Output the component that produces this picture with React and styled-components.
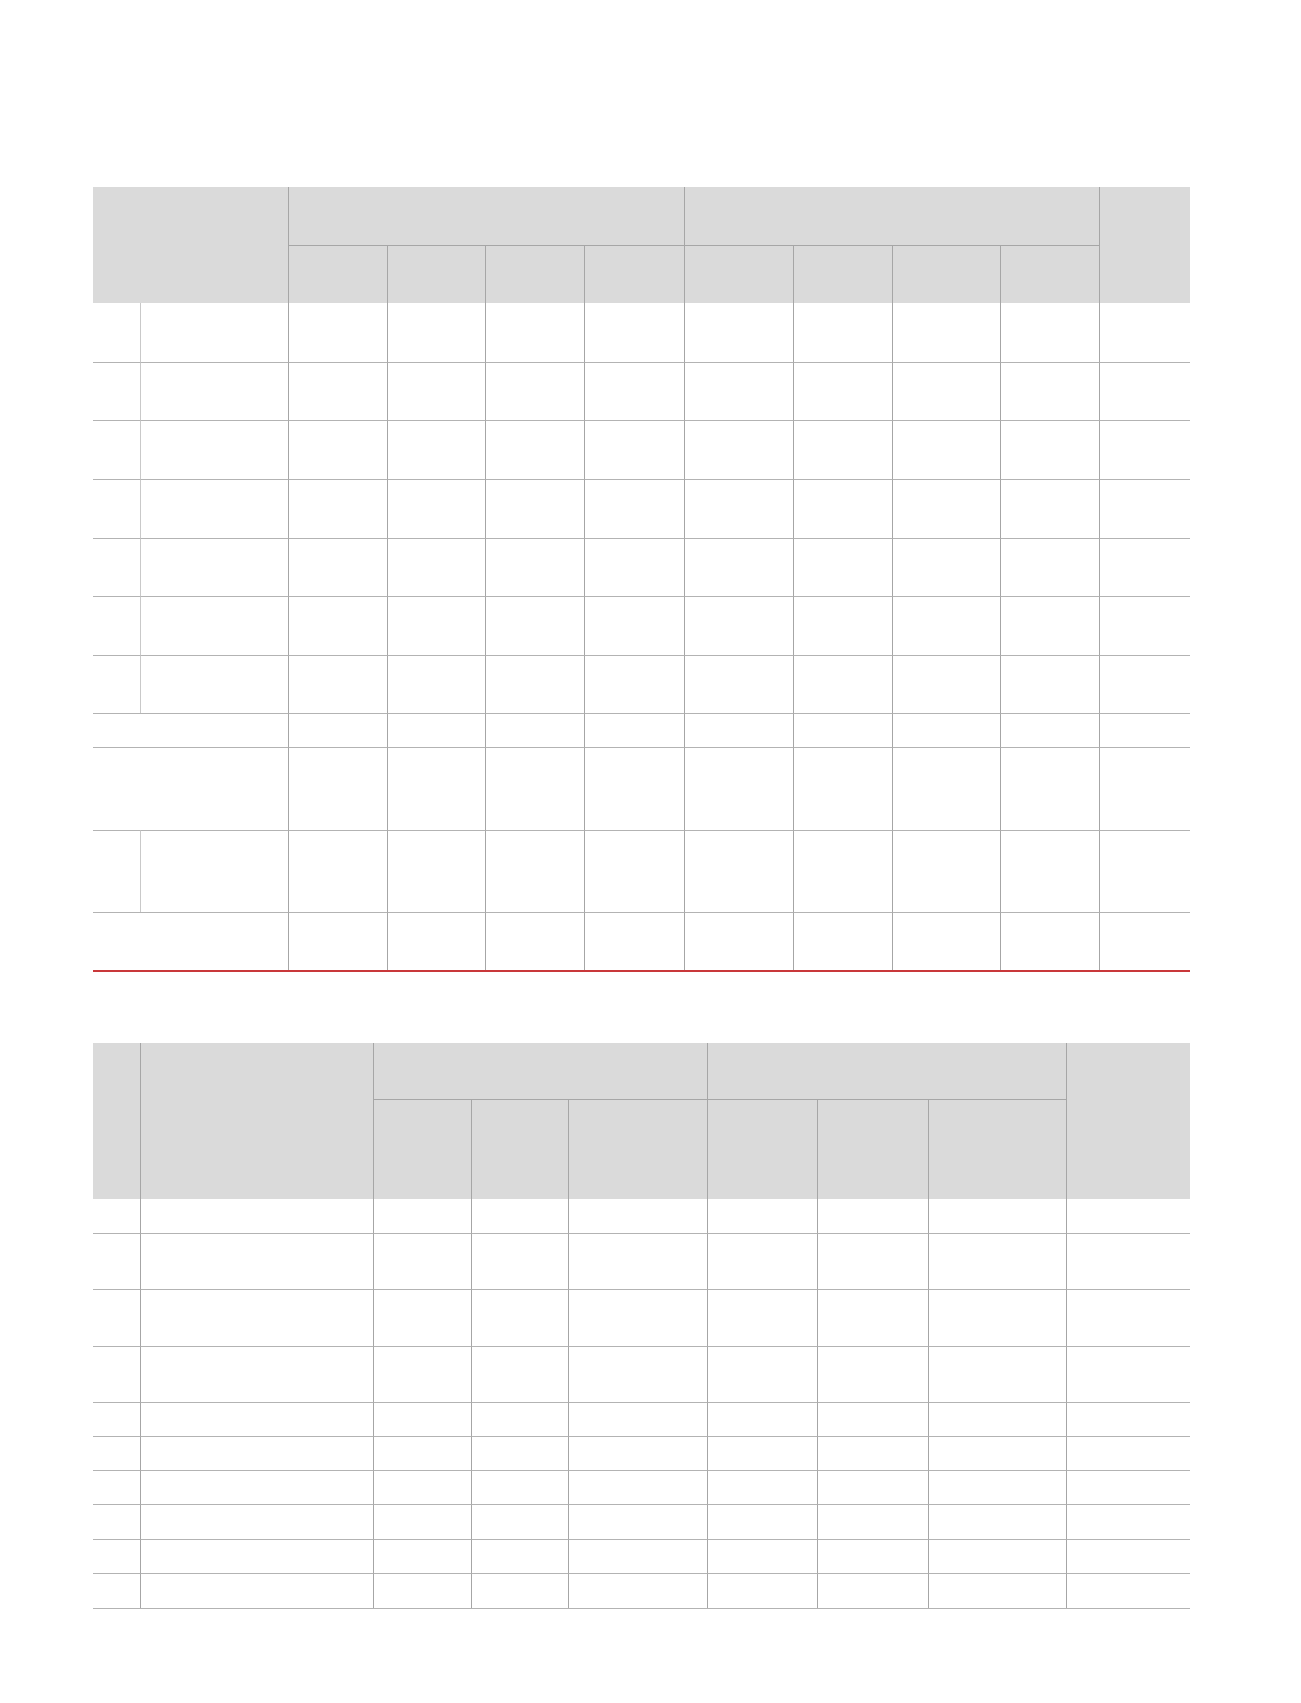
import React from "react";
import styled, { createGlobalStyle } from "styled-components";

const GlobalStyle = createGlobalStyle`
  html, body {
    margin: 0;
    padding: 0;
    background: #ffffff;
    font-family: "Liberation Sans", Arial, sans-serif;
  }
`;

const LINE = "#b3b3b3";
const LINE_DARK = "#a6a6a6";
const LINE_LIGHT = "#c9c9c9";
const HEAD_BG = "#dadada";

const Page = styled.main`
  display: flex;
  flex-direction: column;
  gap: 71px;
  padding: 187px 0 95px 93px;
`;

const Grid = styled.div`
  display: grid;
  width: 1097px;
  grid-template-columns: ${(p) => p.$cols.map((c) => `${c}px`).join(" ")};
  grid-template-rows: ${(p) => p.$rows.map((r) => `${r}px`).join(" ")};
  border-bottom: ${(p) => (p.$accent ? "2px solid #c9383a" : `1px solid ${LINE}`)};
`;

const Cell = styled.div`
  box-sizing: border-box;
  grid-column: ${(p) => p.$c} / span ${(p) => p.$cs || 1};
  grid-row: ${(p) => p.$r} / span ${(p) => p.$rs || 1};
  background: ${(p) => (p.$head ? HEAD_BG : "transparent")};
  border-top: ${(p) => (p.$top ? `1px solid ${p.$head ? LINE_DARK : LINE}` : "none")};
  border-left: ${(p) =>
    p.$left ? `1px solid ${p.$light ? LINE_LIGHT : LINE_DARK}` : "none"};
`;

// table 1 ---------------------------------------------------------------
const cols1 = [47, 148, 99, 98, 99, 100, 109, 99, 108, 99, 91];
const rows1 = [58, 58, 59, 58, 59, 59, 58, 59, 58, 34, 83, 82, 58];
// body rows: true = first column split in two
const body1 = [true, true, true, true, true, true, true, false, false, true, false];

const buildTable1 = () => {
  const cells = [
    { c: 1, cs: 2, r: 1, rs: 2, head: true },
    { c: 3, cs: 4, r: 1, head: true, left: true },
    { c: 7, cs: 4, r: 1, head: true, left: true },
    { c: 11, r: 1, rs: 2, head: true, left: true },
  ];
  for (let c = 3; c <= 10; c++) cells.push({ c, r: 2, head: true, left: true, top: true });
  body1.forEach((split, i) => {
    const r = i + 3;
    const top = i > 0;
    if (split) {
      cells.push({ c: 1, r, top });
      cells.push({ c: 2, r, top, left: true, light: true });
    } else {
      cells.push({ c: 1, cs: 2, r, top });
    }
    for (let c = 3; c <= 11; c++) cells.push({ c, r, top, left: true });
  });
  return cells;
};

// table 2 ---------------------------------------------------------------
const cols2 = [47, 233, 98, 97, 139, 110, 111, 138, 124];
const rows2 = [56, 100, 34, 56, 57, 56, 34, 34, 34, 35, 34, 35];

const buildTable2 = () => {
  const cells = [
    { c: 1, r: 1, rs: 2, head: true },
    { c: 2, r: 1, rs: 2, head: true, left: true },
    { c: 3, cs: 3, r: 1, head: true, left: true },
    { c: 6, cs: 3, r: 1, head: true, left: true },
    { c: 9, r: 1, rs: 2, head: true, left: true },
  ];
  for (let c = 3; c <= 8; c++) cells.push({ c, r: 2, head: true, left: true, top: true });
  for (let i = 0; i < rows2.length - 2; i++) {
    const r = i + 3;
    const top = i > 0;
    cells.push({ c: 1, r, top });
    for (let c = 2; c <= 9; c++) cells.push({ c, r, top, left: true });
  }
  return cells;
};

const Table = ({ cols, rows, cells, accent }) => (
  <Grid $cols={cols} $rows={rows} $accent={accent}>
    {cells.map((cell, i) => (
      <Cell
        key={i}
        $c={cell.c}
        $cs={cell.cs}
        $r={cell.r}
        $rs={cell.rs}
        $head={cell.head}
        $top={cell.top}
        $left={cell.left}
        $light={cell.light}
      />
    ))}
  </Grid>
);

const App = () => (
  <>
    <GlobalStyle />
    <Page>
      <Table cols={cols1} rows={rows1} cells={buildTable1()} accent />
      <Table cols={cols2} rows={rows2} cells={buildTable2()} />
    </Page>
  </>
);

export default App;
